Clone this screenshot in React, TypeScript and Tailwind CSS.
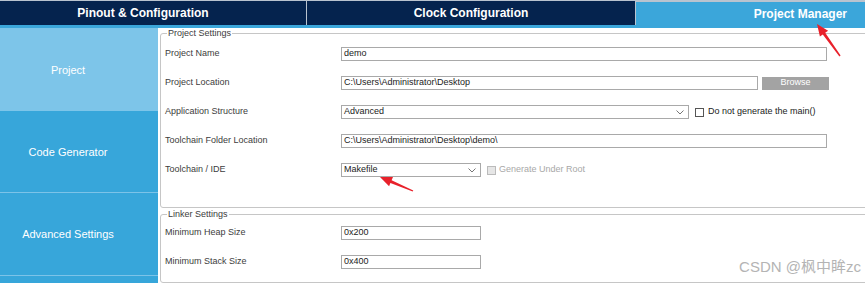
import React from 'react';

const font = { fontFamily: '"Liberation Sans", Arial, "Noto Sans CJK SC", sans-serif' };

const Chevron: React.FC = () => (
  <svg width="8" height="5" viewBox="0 0 8 5" className="ml-auto mr-[4px]">
    <path d="M0.5 0.5 L4 4 L7.5 0.5" fill="none" stroke="#666" strokeWidth="0.9" />
  </svg>
);

const Field: React.FC<{ value: string; w: string; select?: boolean }> = ({ value, w, select }) => (
  <div className={`${w} h-[14px] border border-[#a9a9a9] bg-white flex items-center pl-[2px] text-[9px] text-[#222]`}>
    <span>{value}</span>
    {select && <Chevron />}
  </div>
);

const Row: React.FC<{ label: string; children: React.ReactNode }> = ({ label, children }) => (
  <div className="flex items-center h-[24px]">
    <div className="w-[176px] text-[9px] text-[#3c3c3c]">{label}</div>
    <div className="flex items-center">{children}</div>
  </div>
);

const App: React.FC = () => {
  const sideItems = [
    { id: 'project', label: 'Project', h: 'h-[83px]', active: true },
    { id: 'code', label: 'Code Generator', h: 'h-[82px]', active: false },
    { id: 'advanced', label: 'Advanced Settings', h: 'h-[83px]', active: false },
  ];

  return (
    <div className="relative w-[865px] h-[283px] overflow-hidden bg-white" style={font}>
      {/* Top tabs */}
      <div className="flex h-[25px] bg-[#b9c3cf] pt-[1px] gap-[1px]">
        <div className="w-[306px] bg-[#05234e] flex items-center justify-center pr-[20px] text-white text-[12px] font-bold">
          Pinout &amp; Configuration
        </div>
        <div className="w-[328px] bg-[#05234e] flex items-center justify-center text-white text-[12px] font-bold">
          Clock Configuration
        </div>
        <div className="flex-1 bg-[#3ba6da] mt-[1px] flex items-center justify-end pr-[18px] text-white text-[12px] font-bold">
          Project Manager
        </div>
      </div>
      <div className="h-[3px] bg-[#3ba6da]" />

      <div className="flex h-[255px]">
        {/* Sidebar */}
        <div className="w-[158px] flex flex-col bg-[#37a6da]">
          {sideItems.map(item => (
            <div
              key={item.id}
              className={`${item.h} flex items-center justify-center pr-[22px] pt-[1px] text-white text-[11px] ${
                item.active ? 'bg-[#7dc5e9]' : 'bg-[#37a6da] border-b border-[#7cc3e8]'
              }`}
            >
              {item.label}
            </div>
          ))}
          <div className="flex-1" />
        </div>

        {/* Main */}
        <div className="flex-1 pl-[2px] overflow-hidden">
          <fieldset className="w-[720px] border border-[#c6c6c6] rounded-[3px] px-[4px] pb-[25px]">
            <legend className="ml-[2px] px-[1px] text-[9px] leading-[11px] text-[#3c3c3c]">Project Settings</legend>
            <div className="flex flex-col gap-[5px] pt-[3px]">
              <Row label="Project Name">
                <Field value="demo" w="w-[486px]" />
              </Row>
              <Row label="Project Location">
                <Field value="C:\Users\Administrator\Desktop" w="w-[417px]" />
                <div className="ml-[4px] w-[67px] h-[13px] bg-[#a3a3a3] flex items-center justify-center text-[9px] text-white">
                  Browse
                </div>
              </Row>
              <Row label="Application Structure">
                <Field value="Advanced" w="w-[348px]" select />
                <div className="ml-[6px] w-[9px] h-[9px] border border-[#555] bg-white" />
                <span className="ml-[4px] text-[9px] text-[#222]">Do not generate the main()</span>
              </Row>
              <Row label="Toolchain Folder Location">
                <Field value="C:\Users\Administrator\Desktop\demo\" w="w-[486px]" />
              </Row>
              <Row label="Toolchain / IDE">
                <Field value="Makefile" w="w-[140px]" select />
                <div className="ml-[6px] w-[9px] h-[9px] border border-[#bbb] bg-[#e6e6e6]" />
                <span className="ml-[3px] text-[9px] text-[#a8a8a8]">Generate Under Root</span>
              </Row>
            </div>
          </fieldset>

          <fieldset className="mt-[1px] w-[720px] border border-[#c6c6c6] rounded-[3px] px-[4px] pb-[8px]">
            <legend className="ml-[2px] px-[1px] text-[9px] leading-[11px] text-[#3c3c3c]">Linker Settings</legend>
            <div className="flex flex-col gap-[5px] pt-[1px]">
              <Row label="Minimum Heap Size">
                <Field value="0x200" w="w-[140px]" />
              </Row>
              <Row label="Minimum Stack Size">
                <Field value="0x400" w="w-[140px]" />
              </Row>
            </div>
          </fieldset>
        </div>
      </div>

      {/* Annotation arrows */}
      <svg className="absolute left-0 top-0 pointer-events-none" width="865" height="283" viewBox="0 0 865 283">
        <polygon
          fill="#e8212b"
          points="817,24 828.1,30.8 825.2,32.8 840.6,55.6 839.4,56.4 822.8,34.6 819.9,36.6"
        />
        <polygon
          fill="#e8212b"
          points="380,177 393,177.1 391.6,180.3 413.3,190.4 412.7,191.6 390.4,183.1 389.1,186.3"
        />
      </svg>

      {/* Watermark */}
      <div className="absolute right-[4px] bottom-[7px] text-[15px] leading-[18px] text-[#b4b4b4]">
        CSDN @枫中眸zc
      </div>
    </div>
  );
};

export default App;
